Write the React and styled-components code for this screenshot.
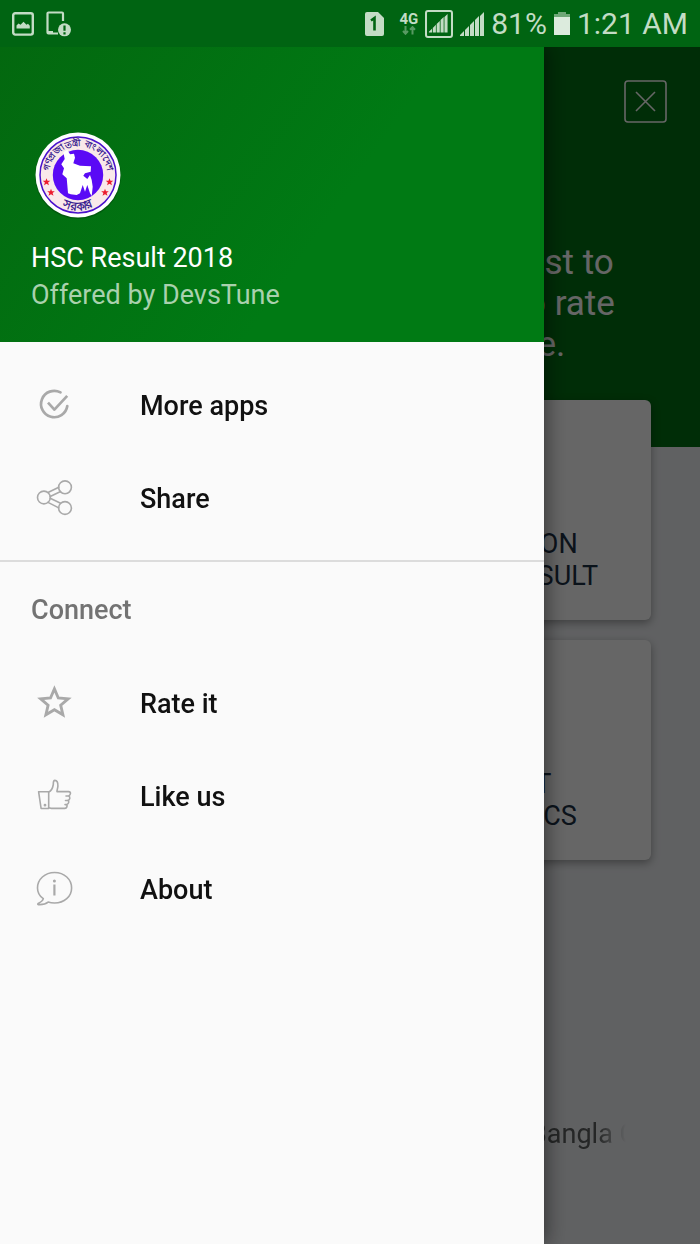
import styled, { createGlobalStyle } from "styled-components";

const GlobalStyle = createGlobalStyle`
  * {
    box-sizing: border-box;
  }

  body {
    margin: 0;
    background: #f0f2f5;
    font-family: Roboto, "Noto Sans", sans-serif;
  }

  p, h1, h2, ul {
    margin: 0;
    padding: 0;
  }
`;

const Screen = styled.div`
  display: flex;
  flex-direction: column;
  min-height: 100vh;
`;

/* Status bar */
const StatusBar = styled.header`
  position: relative;
  z-index: 3;
  display: flex;
  align-items: center;
  justify-content: space-between;
  height: 47px;
  padding: 0 12px;
  background: #006412;
  color: #c3dcc5;

  svg {
    display: block;
    flex: none;
  }
`;

const StatusGroup = styled.div`
  display: flex;
  align-items: center;
  gap: ${({ $gap }) => $gap}px;
`;

const StatusText = styled.span`
  font-size: 30px;
  line-height: 47px;
  white-space: nowrap;
`;

const Network = styled.div`
  display: flex;
  flex-direction: column;
  align-items: center;
  padding-left: 8px;
  font-size: 15px;
  font-weight: 700;
  line-height: 14px;
`;

/* Page that lies under the drawer */
const Page = styled.main`
  display: flex;
  flex: 1;
  flex-direction: column;
`;

const Hero = styled.section`
  display: flex;
  flex-direction: column;
  align-items: flex-end;
  height: 400px;
  padding: 33px 33px 0;
  background: #007012;
  color: #fff;
`;

const CloseButton = styled.button`
  width: 43px;
  height: 43px;
  padding: 0;
  border: 0;
  background: none;
  color: inherit;

  svg {
    display: block;
  }
`;

const HeroText = styled.p`
  width: 141px;
  margin-top: 119px;
  font-size: 35px;
  line-height: 41px;
  white-space: pre-line;
`;

const Cards = styled.section`
  display: grid;
  align-self: flex-end;
  gap: 20px;
  width: calc(50% - 58px);
  margin: -47px 49px 0 0;
`;

const Card = styled.a`
  display: flex;
  align-items: flex-end;
  justify-content: center;
  height: 220px;
  padding-bottom: 28px;
  border-radius: 6px;
  background: #fff;
  box-shadow: 0 3px 8px rgba(0, 0, 0, 0.35);
  color: #1c3044;
  font-size: 27px;
  line-height: 32px;
  text-align: center;
  text-decoration: none;
  white-space: pre-line;
`;

const Ticker = styled.p`
  align-self: flex-end;
  width: 96px;
  margin: auto 74px 94px 0;
  overflow: hidden;
  color: #5c5f5f;
  font-size: 27px;
  line-height: 32px;
  white-space: nowrap;
  mask-image: linear-gradient(to right, #000 70%, transparent);
`;

const Scrim = styled.div`
  position: fixed;
  z-index: 1;
  inset: 0;
  background: rgba(0, 0, 0, 0.6);
`;

/* Drawer */
const Drawer = styled.aside`
  position: fixed;
  z-index: 2;
  top: 47px;
  bottom: 0;
  left: 0;
  width: calc(100% - 156px);
  background: #fafafa;
  box-shadow: 1px 0 20px rgba(0, 0, 0, 0.55);
`;

const DrawerHeader = styled.div`
  padding: 84px 31px 28px;
  background: linear-gradient(125deg, #03680f 0%, #007a14 60%);
  color: #fff;
  font-size: 27px;
  line-height: 37px;
`;

const LogoMark = styled.svg`
  display: block;
  margin: 0 0 21px 3px;
`;

const AppName = styled.h1`
  font-size: 27px;
  font-weight: 400;
  line-height: 37px;
`;

const Developer = styled.p`
  color: #a9d1ad;
`;

const Menu = styled.ul`
  padding: ${({ $top }) => ($top ? "16px 0" : "0")};
  border-bottom: ${({ $top }) => ($top ? "2px solid #dcdcdc" : "0")};
  list-style: none;
`;

const MenuLink = styled.a`
  display: flex;
  align-items: center;
  gap: 62px;
  height: 93px;
  padding: 0 31px;
  color: #111;
  font-size: 27px;
  font-weight: 500;
  text-decoration: none;

  svg {
    flex: none;
    color: #a9a9a9;
  }
`;

const MenuLabel = styled.span`
  padding-top: 2px;
`;

const SectionTitle = styled.h2`
  height: 94px;
  padding: 0 31px;
  color: #737373;
  font-size: 27px;
  font-weight: 500;
  line-height: 96px;
`;

const Icon = ({ children, width = 1.6 }) => (
  <svg
    width="47"
    height="47"
    viewBox="0 0 47 47"
    fill="none"
    stroke="currentColor"
    strokeWidth={width}
    strokeLinecap="round"
    strokeLinejoin="round"
    aria-hidden="true"
  >
    {children}
  </svg>
);

const CheckIcon = () => (
  <Icon width={2.7}>
    <path d="M29.5 11.4A13.2 13.2 0 1 0 36.3 25" />
    <path d="M17 21.6l6.4 7L36.2 14.8" strokeLinecap="butt" />
  </Icon>
);

const ShareIcon = () => (
  <Icon>
    <circle cx="12.9" cy="23.5" r="6.4" />
    <circle cx="34" cy="13.3" r="6.4" />
    <circle cx="34" cy="34" r="6.4" />
    <path d="M17 18.5l10.8-5.3M19.2 22.4l10.4-4.8M19.2 24.2l10.4 5M17 28.4l10.8 5.5" />
  </Icon>
);

const StarIcon = () => (
  <Icon width={2.9}>
    <path
      strokeLinejoin="miter"
      d="M23.4 9.9l3.9 9.1 9.8.8-7.4 6.4 2.2 9.6-8.5-5.1-8.5 5.1 2.2-9.6-7.4-6.4 9.8-.8z"
    />
  </Icon>
);

const LikeIcon = () => (
  <Icon>
    <path d="M7.6 19.7h10.1v16.8H10.1z" />
    <path d="M17.7 19.9c3.3-1.2 4-3.8 4.6-7.4.1-2.1-.3-4.1 1.6-4.1 2.3.1 3.1 3.3 3 5.8-.1 2.1-1.1 3.9-.9 5.4h11.5c2.9.3 2.3 3.5.1 4.3 1.9.8 1.5 4-.7 4.5 1.5 1 .9 3.6-1.2 4.1.9 1.4.2 3.7-1.9 3.9H20.2c-.9 0-1.5-.7-2.5-.7M35 24h2.5M34.5 28.5H37M34 32.6h2" />
    <circle cx="14" cy="33.2" r=".6" fill="currentColor" />
  </Icon>
);

const AboutIcon = () => (
  <Icon>
    <path d="M12.3 33.7C8.7 31.1 6.5 27.3 6.5 22.9 6.5 14.3 13.8 7.5 23.6 7.5s17 6.8 17 15.4c0 8.5-7.3 15.1-17 15.1-2.5 0-4.6-.3-6.5-.9-2.5 2.1-6.3 2.7-9.8 2.5-.7 0-.7-.7-.1-1.1 2.4-1.2 4.6-2.4 5.1-4.8z" />
    <path d="M23.4 19.5v11" strokeWidth="2.2" strokeLinecap="butt" />
    <circle cx="23.4" cy="16" r=".7" fill="currentColor" />
  </Icon>
);

const PictureIcon = () => (
  <svg width="22" height="24" viewBox="0 0 22 24" aria-hidden="true">
    <rect x="1.2" y="1.2" width="19.6" height="21.4" rx="2" fill="none" stroke="currentColor" strokeWidth="2.4" />
    <path d="M4.5 16.5v-3l2-2 2 1.2 3-3 3 3 1.5-1 1.8 2v2.8z" fill="currentColor" />
  </svg>
);

const DeviceIcon = () => (
  <svg width="26" height="26" viewBox="0 0 26 26" aria-hidden="true">
    <path d="M17 10V2.5a1 1 0 0 0-1-1H2.5a1 1 0 0 0-1 1v19a1 1 0 0 0 1 1H12" fill="none" stroke="currentColor" strokeWidth="2.2" />
    <path d="M1.5 20H7v2.5H1.5z" fill="currentColor" />
    <circle cx="18.5" cy="18.8" r="6.5" fill="currentColor" />
    <path d="M18.5 14.5v5.3M18.5 21.2v2.2" stroke="#006412" strokeWidth="2.2" />
  </svg>
);

const SimIcon = () => (
  <svg width="19" height="24" viewBox="0 0 19 24" aria-hidden="true">
    <path d="M2 0h11l6 6v16a2 2 0 0 1-2 2H2a2 2 0 0 1-2-2V2a2 2 0 0 1 2-2z" fill="currentColor" />
    <path d="M6 8.5L9.500 6v12.500" fill="none" stroke="#006412" strokeWidth="2.6" />
  </svg>
);

const DataArrows = () => (
  <svg width="14" height="9" viewBox="0 0 14 9" aria-hidden="true" opacity=".45">
    <path d="M3.5 0v7M1 5l2.5 2.7L6 5M10.5 8.5v-7M8 3.8l2.5-2.7L13 3.8" fill="none" stroke="currentColor" strokeWidth="2" />
  </svg>
);

const SignalIcon = ({ boxed }) => (
  <svg width={boxed ? 28 : 24} height={boxed ? 28 : 24} viewBox={boxed ? "-5 -5 36 36" : "0 0 24 24"} aria-hidden="true">
    {boxed && (
      <rect x="-3.7" y="-3.7" width="33.4" height="33.4" rx="2.5" fill="none" stroke="currentColor" strokeWidth="2.6" />
    )}
    <path d="M0 24v-1l4-4v5zM5 24v-6l4-4v10zM10 24V13l4-4v15zM15 24V8l4-4v20zM20 24V4l4-4v24z" fill="currentColor" />
  </svg>
);

const BatteryIcon = () => (
  <svg width="16" height="23" viewBox="0 0 16 23" aria-hidden="true">
    <path d="M4 0h8v2h4v4H0V2h4z" fill="#6fa777" />
    <path d="M0 5h16v18H0z" fill="#dcebdd" />
  </svg>
);

const star = "M0-3.8l1 2.5 2.8.1-2.2 1.7.9 2.7L0 1.7l-2.5 1.5.9-2.7-2.2-1.7 2.8-.1z";

const Logo = () => (
  <LogoMark width="88" height="88" viewBox="0 0 88 88" role="img" aria-label="HSC Result logo">
    <defs>
      <path id="arc-top" d="M15 50A29.5 29.5 0 1 1 73 50" />
      <path id="arc-bottom" d="M17 67A35.5 35.5 0 0 0 71 67" />
    </defs>
    <circle cx="44" cy="45" r="43" fill="#003d08" opacity=".45" />
    <circle cx="44" cy="44" r="42.5" fill="#fff" />
    <circle cx="44" cy="44" r="38" fill="#f9e9ea" stroke="#4a12cc" strokeWidth="1.5" />
    <circle cx="44" cy="44" r="25.2" fill="#5a0af5" />
    <path
      d="M29.3 21.3l4-2.6 2.7 4.6 4-.6 1 4-1.7 5.6 6.7 2.4 11 .6-.3 5.4-5.7 1.6-1.7 2.4 4 3.3 2.7-4 1.7 5 1 6.7-1 9.3-1.7-2.7-2.7-8.3-2.3 6.7-2.3-6.7-2.7 8.3-3.3 1.7-6-.7-2.7-1-.7-8.3-.6-6.7-4.4-4 1.7-6-2.7-4 3.4-5.3z"
      fill="#fff"
    />
    <g fill="#ec1c2e">
      <path d={star} transform="translate(12.5 51)" />
      <path d={star} transform="translate(17 61.5)" />
      <path d={star} transform="translate(75.5 51)" />
      <path d={star} transform="translate(71 61.5)" />
    </g>
    <g fill="#38208f" fontWeight="700" textAnchor="middle">
      <text fontSize="9">
        <textPath href="#arc-top" startOffset="50%">গণপ্রজাতন্ত্রী বাংলাদেশ</textPath>
      </text>
      <text fontSize="12">
        <textPath href="#arc-bottom" startOffset="50%">সরকার</textPath>
      </text>
    </g>
  </LogoMark>
);

const MenuItem = ({ icon, label }) => (
  <li>
    <MenuLink href="#">
      {icon}
      <MenuLabel>{label}</MenuLabel>
    </MenuLink>
  </li>
);

const App = () => {
  return (
    <Screen>
      <GlobalStyle />
      <StatusBar>
        <StatusGroup $gap={12}>
          <PictureIcon />
          <DeviceIcon />
        </StatusGroup>
        <StatusGroup $gap={7}>
          <SimIcon />
          <Network>
            4G
            <DataArrows />
          </Network>
          <SignalIcon boxed />
          <SignalIcon />
          <StatusText>81%</StatusText>
          <BatteryIcon />
          <StatusText>1:21 AM</StatusText>
        </StatusGroup>
      </StatusBar>

      <Page>
        <Hero>
          <CloseButton type="button" aria-label="Close">
            <svg width="43" height="43" viewBox="0 0 43 43" fill="none" stroke="currentColor" strokeWidth="1.6">
              <rect x="1" y="1" width="41" height="41" rx="3" />
              <path d="M12 12l19 19M31 12L12 31" />
            </svg>
          </CloseButton>
          <HeroText>{"est to\no rate\nre."}</HeroText>
        </Hero>
        <Cards>
          <Card href="#">{"EDUCATION\nBOARD RESULT"}</Card>
          <Card href="#">{"RESULT\nSTATISTICS"}</Card>
        </Cards>
        <Ticker>Bangla C</Ticker>
      </Page>

      <Scrim />

      <Drawer>
        <DrawerHeader>
          <Logo />
          <AppName>HSC Result 2018</AppName>
          <Developer>Offered by DevsTune</Developer>
        </DrawerHeader>
        <nav>
          <Menu $top>
            <MenuItem icon={<CheckIcon />} label="More apps" />
            <MenuItem icon={<ShareIcon />} label="Share" />
          </Menu>
          <SectionTitle>Connect</SectionTitle>
          <Menu>
            <MenuItem icon={<StarIcon />} label="Rate it" />
            <MenuItem icon={<LikeIcon />} label="Like us" />
            <MenuItem icon={<AboutIcon />} label="About" />
          </Menu>
        </nav>
      </Drawer>
    </Screen>
  );
};

export default App;
